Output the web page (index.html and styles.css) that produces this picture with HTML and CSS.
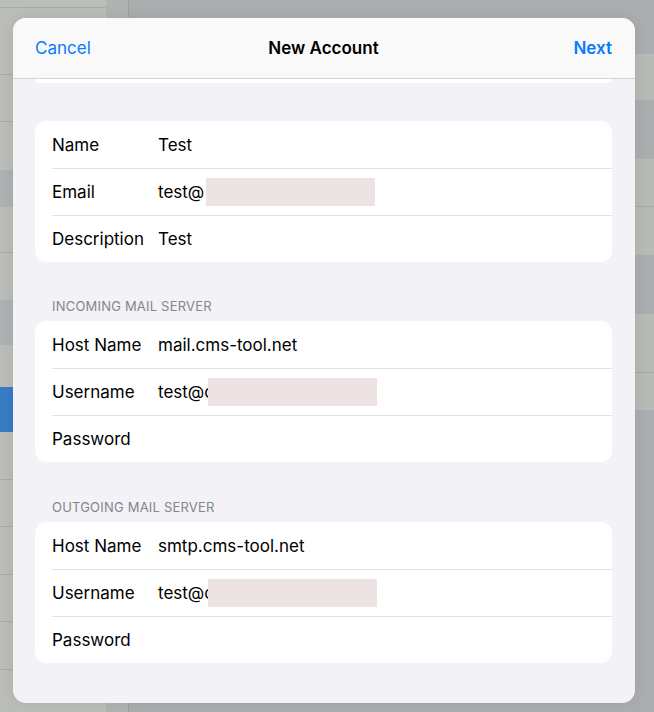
FILE: index.html
```html
<!DOCTYPE html>
<html lang="en">
<head>
<meta charset="utf-8">
<title>New Account</title>
<link rel="stylesheet" href="styles.css">
</head>
<body>
<div class="backdrop">
  <aside class="sidebar">
    <div class="srow h8 line"></div>
    <div class="srow h67 line"></div>
    <div class="srow h47 line"></div>
    <div class="srow h48"></div>
    <div class="srow h37 dim"></div>
    <div class="srow h46 line"></div>
    <div class="srow h47"></div>
    <div class="srow h45 dim"></div>
    <div class="srow h42"></div>
    <div class="srow h45 sel"></div>
    <div class="srow h48 line"></div>
    <div class="srow h47 line"></div>
    <div class="srow h48 line"></div>
    <div class="srow h47 line"></div>
    <div class="srow h48 line"></div>
  </aside>
  <div class="strip"></div>
  <main class="main">
    <div class="mrow h54"></div>
    <div class="mrow h46 lite"></div>
    <div class="mrow h59"></div>
    <div class="mrow h48 lite line"></div>
    <div class="mrow h48 lite"></div>
    <div class="mrow h59"></div>
    <div class="mrow h59 lite line"></div>
    <div class="mrow h37 lite"></div>
  </main>
</div>

<div class="modal">
  <header class="modal-header">
    <span class="nav-btn cancel">Cancel</span>
    <span class="nav-title">New Account</span>
    <span class="nav-btn next">Next</span>
  </header>
  <div class="modal-body">
    <div class="card peek"></div>

    <section class="group first">
      <div class="card">
        <div class="row"><span class="label">Name</span><span class="value">Test</span></div>
        <div class="row"><span class="label">Email</span><span class="value">test@<span class="redact"></span></span></div>
        <div class="row"><span class="label">Description</span><span class="value">Test</span></div>
      </div>
    </section>

    <section class="group">
      <h2 class="group-title">Incoming Mail Server</h2>
      <div class="card">
        <div class="row"><span class="label">Host Name</span><span class="value">mail.cms-tool.net</span></div>
        <div class="row"><span class="label">Username</span><span class="value">test@c<span class="redact over"></span></span></div>
        <div class="row"><span class="label">Password</span><span class="value"></span></div>
      </div>
    </section>

    <section class="group last">
      <h2 class="group-title">Outgoing Mail Server</h2>
      <div class="card">
        <div class="row"><span class="label">Host Name</span><span class="value">smtp.cms-tool.net</span></div>
        <div class="row"><span class="label">Username</span><span class="value">test@c<span class="redact over"></span></span></div>
        <div class="row"><span class="label">Password</span><span class="value"></span></div>
      </div>
    </section>
  </div>
</div>
</body>
</html>
```

FILE: styles.css
```css
* { box-sizing: border-box; }

html, body {
  margin: 0;
  padding: 0;
}

body {
  width: 654px;
  height: 712px;
  overflow: hidden;
  background: #abadae;
  font-family: Inter, "Liberation Sans", sans-serif;
  position: relative;
}

/* ---------- background app (behind the sheet) ---------- */
.backdrop {
  display: flex;
  height: 712px;
}

.sidebar {
  width: 106px;
  background: #bbbdb9;
  display: flex;
  flex-direction: column;
}

.srow { flex: none; }
.srow.line { border-bottom: 1px solid #a9aba8; }
.srow.dim { background: #afb2b3; }
.srow.sel { background: #3a7bc6; }

.strip {
  width: 23px;
  background: #b1b3b2;
  border-right: 1px solid #a0a2a2;
}

.main {
  flex: 1;
  display: flex;
  flex-direction: column;
}

.mrow { flex: none; }
.mrow.lite { background: #b8bab6; }
.mrow.line { border-bottom: 1px solid #a8aaa8; }

.h8 { height: 8px; }
.h37 { height: 37px; }
.h42 { height: 42px; }
.h45 { height: 45px; }
.h46 { height: 46px; }
.h47 { height: 47px; }
.h48 { height: 48px; }
.h54 { height: 54px; }
.h59 { height: 59px; }
.h67 { height: 67px; }

/* ---------- modal sheet ---------- */
.modal {
  position: absolute;
  left: 13px;
  top: 18px;
  width: 622px;
  height: 685px;
  border-radius: 13px;
  overflow: hidden;
  background: #f2f2f7;
  box-shadow: 0 0 16px rgba(0, 0, 0, 0.08);
  display: flex;
  flex-direction: column;
}

.modal-header {
  flex: none;
  height: 61px;
  background: #f9f9f9;
  border-bottom: 1px solid #d3d3d6;
  display: grid;
  grid-template-columns: 1fr auto 1fr;
  align-items: center;
  padding: 0 23px 0 22px;
  font-size: 17px;
  line-height: 22px;
}

.nav-btn {
  color: #0a7aff;
}

.cancel { justify-self: start; }
.next { justify-self: end; font-weight: 600; }

.nav-title {
  color: #000;
  font-weight: 600;
}

.modal-body {
  flex: 1;
  padding: 0 23px 0 22px;
}

.card {
  background: #fff;
  border-radius: 11px;
  overflow: hidden;
}

.card.peek {
  height: 4px;
  border-radius: 0 0 10px 10px;
}

.group.first { margin-top: 38px; }

.group-title {
  margin: 36px 0 7px 17px;
  height: 16px;
  font-size: 13px;
  line-height: 16px;
  font-weight: 400;
  text-transform: uppercase;
  color: #86868b;
  letter-spacing: 0.2px;
}

.group.last .group-title { margin-top: 37px; }

.row {
  height: 47px;
  display: flex;
  align-items: center;
  padding-left: 17px;
  font-size: 17px;
  color: #000;
}

.row + .row {
  border-top: 1px solid #e3e3e6;
  margin-left: 17px;
  padding-left: 0;
}

.label {
  width: 106px;
  flex: none;
}

.value {
  display: flex;
  align-items: center;
  white-space: nowrap;
}

.redact {
  display: inline-block;
  width: 169px;
  height: 28px;
  background: #ede3e3;
  margin-left: 2px;
}

.redact.over {
  margin-left: -6px;
}
```
